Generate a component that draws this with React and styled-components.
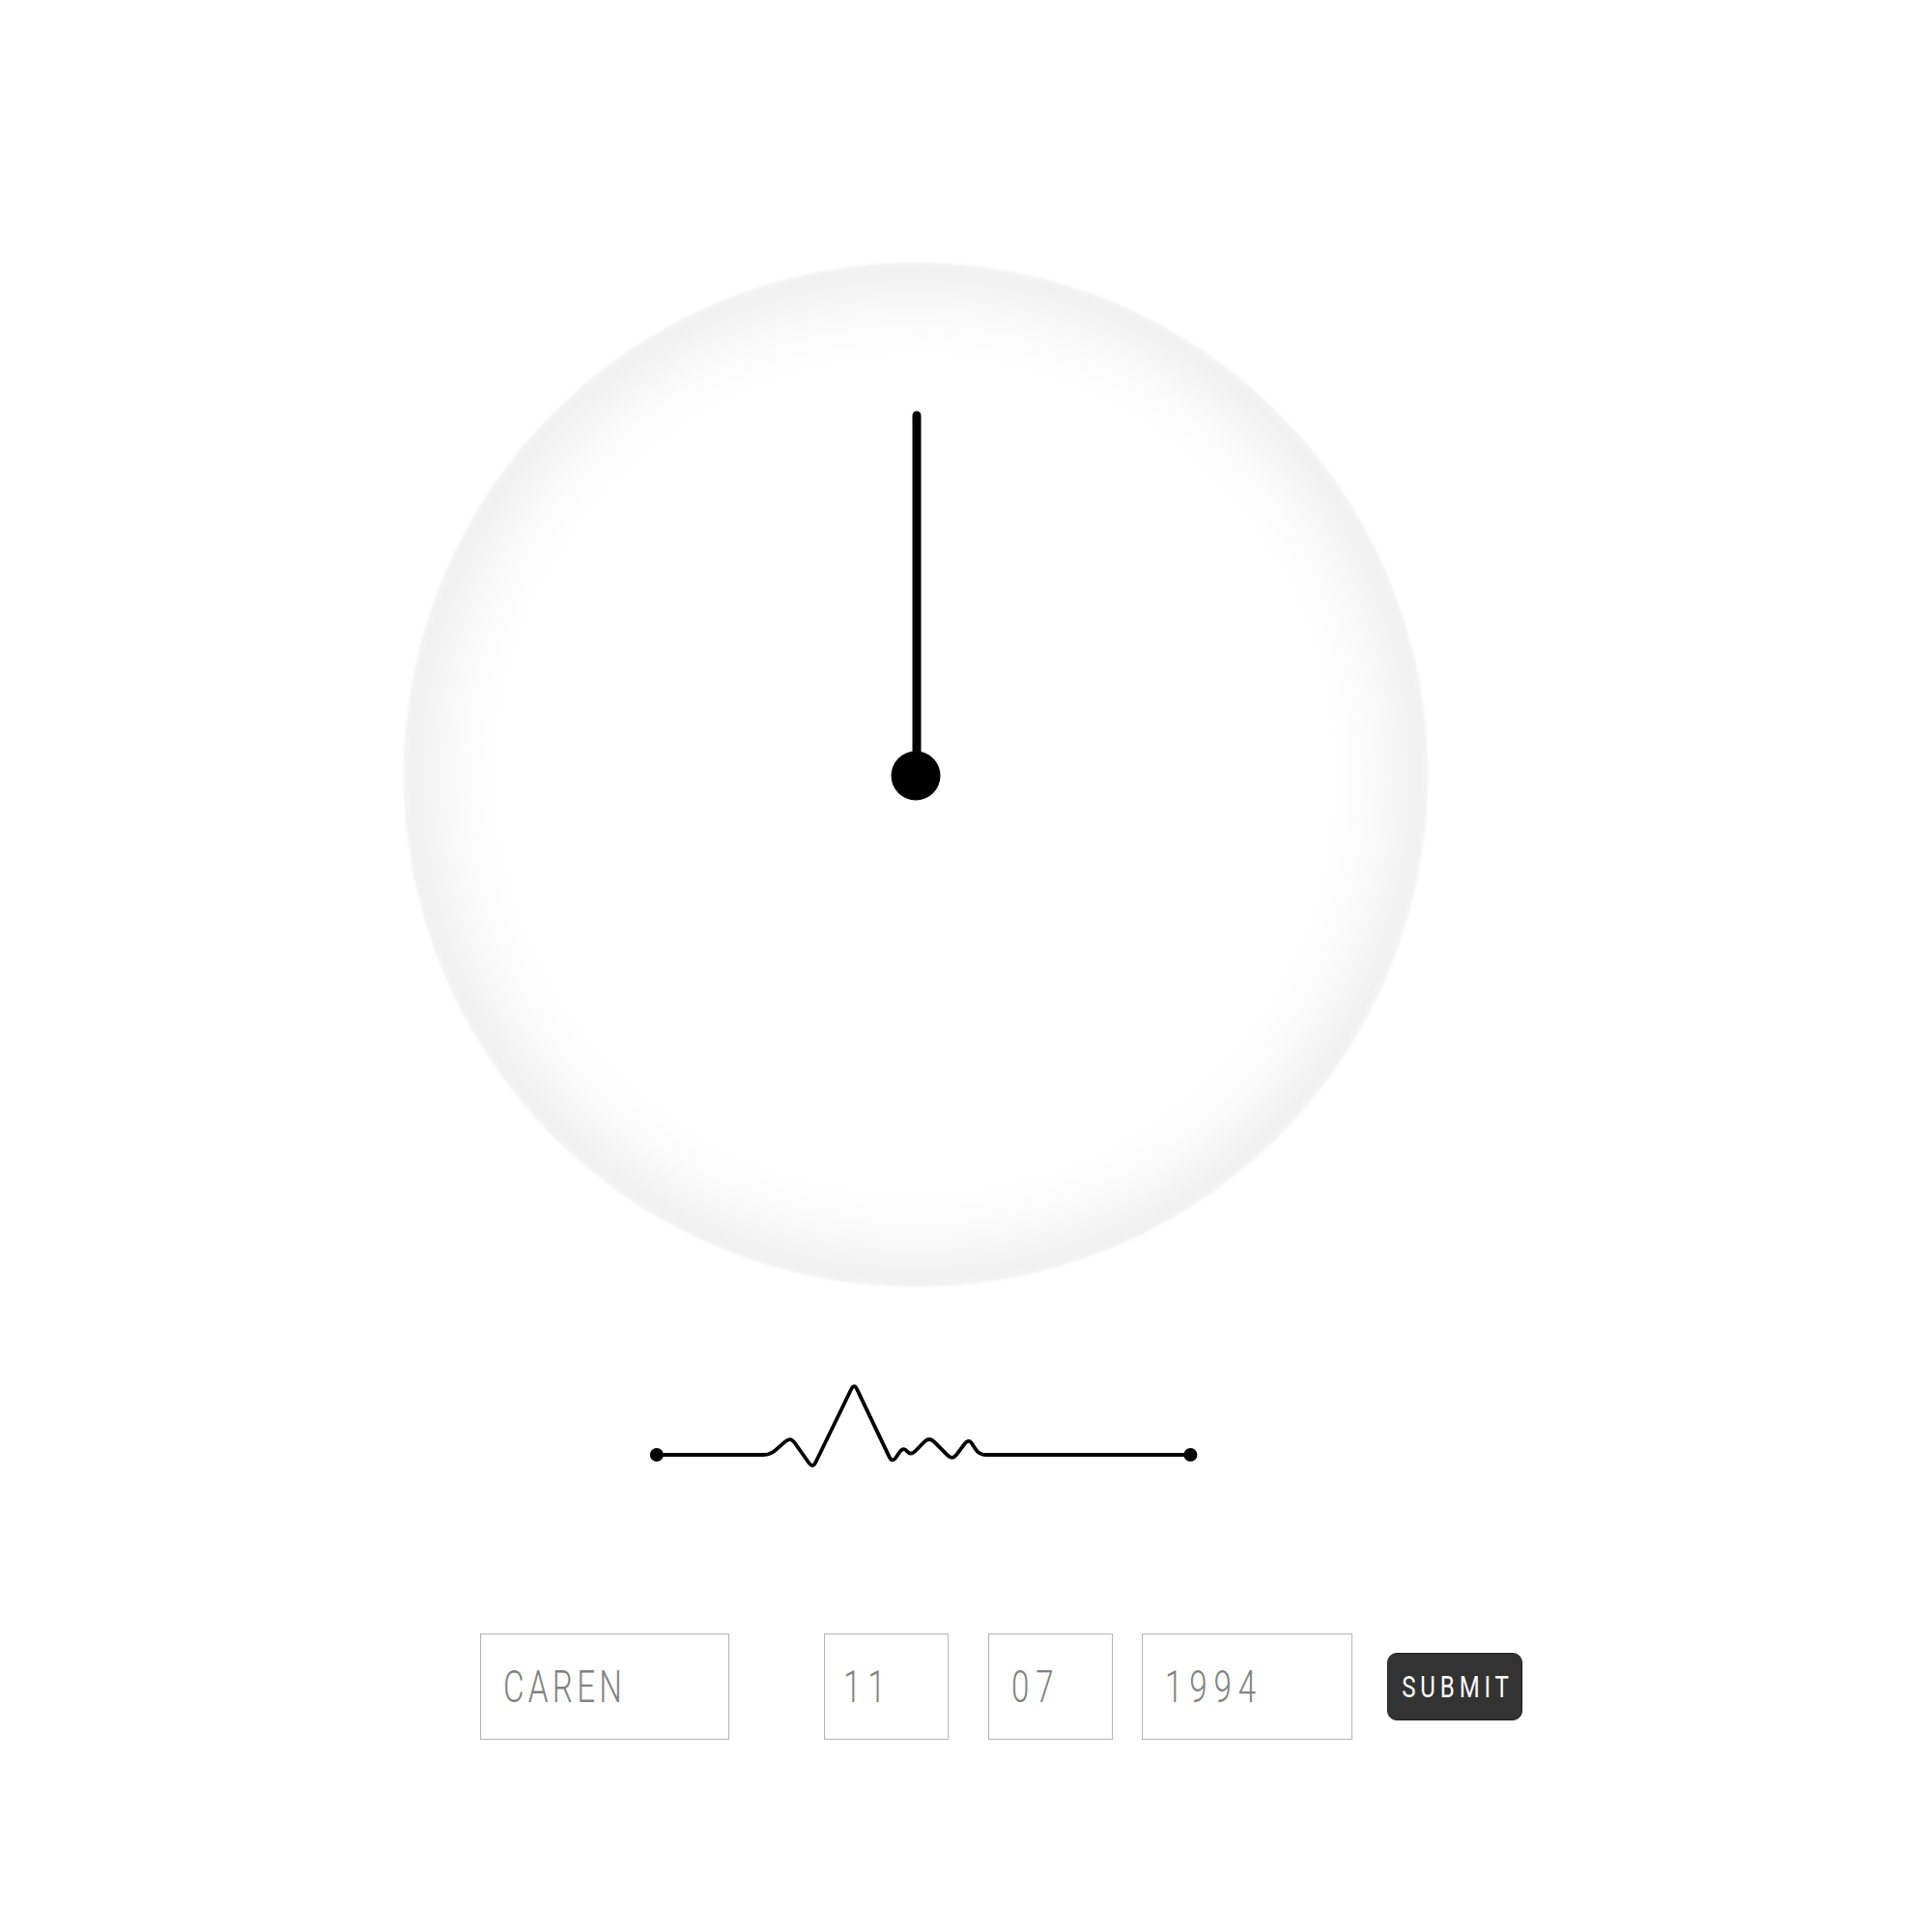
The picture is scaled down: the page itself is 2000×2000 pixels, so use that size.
import React from "react";
import styled, { createGlobalStyle } from "styled-components";

const GlobalStyle = createGlobalStyle`
  html, body {
    margin: 0;
    padding: 0;
    background: #ffffff;
  }
  body {
    font-family: Roboto, "Liberation Sans", sans-serif;
  }
`;

const Page = styled.main`
  display: flex;
  flex-direction: column;
  align-items: flex-start;
  padding-top: 270px;
  min-height: 2000px;
  box-sizing: border-box;
`;

const Dial = styled.div`
  width: 1064px;
  height: 1064px;
  margin-left: 416px;
  border-radius: 50%;
  background: radial-gradient(
    circle closest-side,
    #ffffff 0%,
    #ffffff 81%,
    #fbfbfb 88%,
    #f5f5f5 94%,
    #f1f1f1 98%,
    #f3f3f3 99.3%,
    #ffffff 100%
  );
`;

const DialFace = styled.svg`
  display: block;
  width: 100%;
  height: 100%;
`;

const Pulse = styled.svg`
  display: block;
  width: 580px;
  height: 110px;
  margin-top: 86px;
  margin-left: 665px;
`;

const Form = styled.form`
  display: flex;
  align-items: center;
  margin-left: 497px;
  margin-top: 161px;
`;

const Field = styled.label`
  display: block;
  flex: none;
  box-sizing: border-box;
  width: ${(p) => p.$w}px;
  height: 110px;
  margin-left: ${(p) => p.$gap}px;
  padding-left: ${(p) => p.$pad}px;
  border: 1px solid #b3b3b3;
  background: #fff;
  overflow: hidden;
`;

const FieldInput = styled.input`
  display: block;
  box-sizing: border-box;
  width: 140%;
  height: 100%;
  margin: 0;
  padding: 0;
  border: 0;
  outline: none;
  background: transparent;
  font-family: Roboto, "Liberation Sans", sans-serif;
  font-weight: 300;
  font-size: 46px;
  letter-spacing: ${(p) => p.$ls}px;
  color: #828282;
  transform: scaleX(0.72);
  transform-origin: left center;
`;

const Submit = styled.button`
  display: flex;
  flex: none;
  align-items: center;
  justify-content: center;
  box-sizing: border-box;
  width: 140px;
  height: 70px;
  margin-left: 36px;
  padding: 0 0 0 6px;
  border: 1px solid #1e1e1e;
  border-radius: 10px;
  background: #333333;
  color: #ffffff;
  cursor: pointer;
`;

const SubmitLabel = styled.span`
  display: inline-block;
  white-space: nowrap;
  font-family: Roboto, "Liberation Sans", sans-serif;
  font-weight: 400;
  font-size: 32px;
  letter-spacing: 6.5px;
  transform: scaleX(0.75);
`;

function roundedPath(pts, r) {
  let d = `M${pts[0][0]} ${pts[0][1]}`;
  for (let i = 1; i < pts.length - 1; i++) {
    const [px, py] = pts[i - 1];
    const [vx, vy] = pts[i];
    const [nx, ny] = pts[i + 1];
    const l1 = Math.hypot(vx - px, vy - py);
    const l2 = Math.hypot(nx - vx, ny - vy);
    const r1 = Math.min(r, l1 / 2);
    const r2 = Math.min(r, l2 / 2);
    const ax = vx - ((vx - px) / l1) * r1;
    const ay = vy - ((vy - py) / l1) * r1;
    const bx = vx + ((nx - vx) / l2) * r2;
    const by = vy + ((ny - vy) / l2) * r2;
    d += ` L${ax.toFixed(2)} ${ay.toFixed(2)} Q${vx} ${vy} ${bx.toFixed(2)} ${by.toFixed(2)}`;
  }
  const last = pts[pts.length - 1];
  d += ` L${last[0]} ${last[1]}`;
  return d;
}

const pulsePoints = [
  [14.8, 86],
  [132.3, 86],
  [153.4, 67.5],
  [176.3, 100],
  [219.2, 12],
  [258.6, 94.5],
  [270.1, 77.5],
  [277.7, 87],
  [296.9, 67.5],
  [321, 91.5],
  [337.8, 69],
  [348.5, 86],
  [567.4, 86],
];

const fields = [
  { label: "Name", value: "CAREN", w: 258, gap: 0, pad: 23, ls: 6 },
  { label: "Day", value: "11", w: 129, gap: 98, pad: 19, ls: 9.5 },
  { label: "Month", value: "07", w: 129, gap: 41, pad: 22.5, ls: 9.5 },
  { label: "Year", value: "1994", w: 218, gap: 30, pad: 23, ls: 9.5 },
];

export default function App() {
  return (
    <>
      <GlobalStyle />
      <Page>
        <Dial>
          <DialFace viewBox="0 0 1064 1064">
            <line
              x1="533"
              y1="160"
              x2="533"
              y2="533"
              stroke="#000"
              strokeWidth="9"
              strokeLinecap="round"
            />
            <circle cx="532" cy="533" r="25.5" fill="#000" />
          </DialFace>
        </Dial>

        <Pulse viewBox="0 0 580 110">
          <path
            d={roundedPath(pulsePoints, 7)}
            fill="none"
            stroke="#000"
            strokeWidth="3.8"
            strokeLinejoin="round"
            strokeLinecap="round"
          />
          <circle cx="14.8" cy="86" r="7" fill="#000" />
          <circle cx="567.4" cy="86" r="7" fill="#000" />
        </Pulse>

        <Form onSubmit={(e) => e.preventDefault()}>
          {fields.map((f) => (
            <Field key={f.label} $w={f.w} $gap={f.gap} $pad={f.pad}>
              <FieldInput defaultValue={f.value} aria-label={f.label} $ls={f.ls} />
            </Field>
          ))}
          <Submit type="submit">
            <SubmitLabel>SUBMIT</SubmitLabel>
          </Submit>
        </Form>
      </Page>
    </>
  );
}
